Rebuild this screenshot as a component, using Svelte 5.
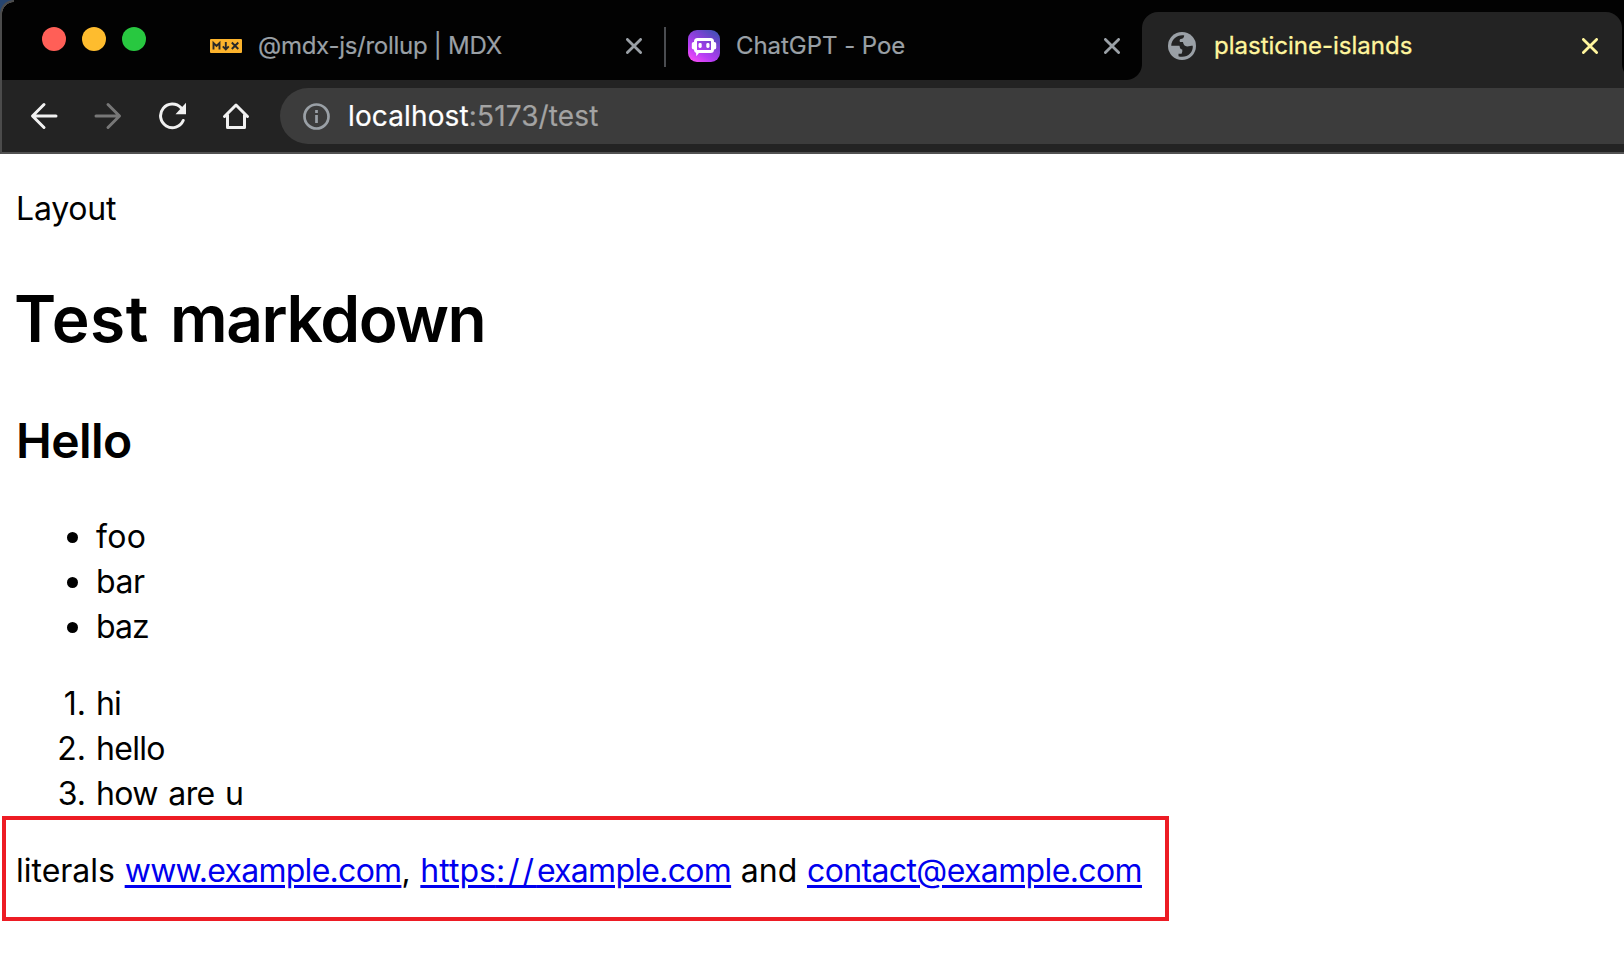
<script>
  const bullets = [
    { text: 'foo', track: 0.3 },
    { text: 'bar', track: -0.5 },
    { text: 'baz', track: -0.9 }
  ];
  const steps = [
    { text: 'hi', track: -0.8 },
    { text: 'hello', track: -0.7 },
    { text: 'how are u', track: -0.6 }
  ];
</script>

{#snippet cross()}
  <svg class="cross" width="16" height="16" viewBox="0 0 16 16"><path d="M1.4 1.4 14.6 14.6M14.6 1.4 1.4 14.6" /></svg>
{/snippet}

<div class="window">
  <header class="chrome">
    <div class="tabs">
      <div class="lights"><i class="red"></i><i class="yellow"></i><i class="green"></i></div>
      <div class="tab first">
        <svg width="32" height="14" viewBox="0 0 32 14"><rect width="32" height="14" rx="1" fill="#fcb32c" /><path d="M3.5 10.5V4l3 3 3-3v6.5M15.800 3v7M12.800 7.300l3 3 3-3M21.800 3.500l6.500 6.500M28.300 3.500 21.800 10" fill="none" stroke="#292929" stroke-width="1.900" /></svg>
        <span class="title">@mdx-js/rollup | MDX</span>
        {@render cross()}
      </div>
      <div class="sep"></div>
      <div class="tab second">
        <svg width="32" height="32" viewBox="0 0 32 32">
          <defs><linearGradient id="poe" x1="0.150" y1="1" x2="0.850" y2="0"><stop offset="0" stop-color="#f84df5" /><stop offset=".3" stop-color="#b83df5" /><stop offset=".65" stop-color="#8142d5" /><stop offset="1" stop-color="#3f51b5" /></linearGradient></defs>
          <rect width="32" height="32" rx="9" fill="url(#poe)" />
          <rect x="7.500" y="9.500" width="17" height="12" rx="2" fill="none" stroke="#fff" stroke-width="3" />
          <rect x="3.800" y="12" width="4" height="7.500" rx="1.800" fill="#fff" /><rect x="24.200" y="12" width="4" height="7.500" rx="1.800" fill="#fff" />
          <path d="M8 20.500h5L8.300 26.300Z" fill="#fff" />
          <rect x="10.500" y="13" width="3.200" height="5" rx="1.400" fill="#fff" /><rect x="18.300" y="13" width="3.200" height="5" rx="1.400" fill="#fff" />
        </svg>
        <span class="title">ChatGPT - Poe</span>
        {@render cross()}
      </div>
      <div class="tab active">
        <svg width="28" height="28" viewBox="2 2 20 20"><circle cx="12" cy="12" r="10" fill="#9aa0a6" /><path fill="#232323" d="M4.300 11.800C4.500 7.500 8 4.300 12.300 4.300c.6 0 1 .1 1.300.2-.2 1.800-1 2.500-3 2.600-.5 1-.3 1.500 0 2.100h2.100c.3 2 1.200 3.100 3 3.100 1.700 0 2.500-.5 4-.5.400 4.400-3 7.900-7.600 7.900-1.200 0-1.900-.1-2.600-.4v-1.800h2.200c.5-1 .700-2 .5-3-1-.1-1.700-.7-2-2.700Z" /></svg>
        <span class="title">plasticine-islands</span>
        {@render cross()}
      </div>
    </div>
    <div class="toolbar">
      <svg width="28" height="28" viewBox="0 0 28 28"><path d="M26 14H3M14 2.500 2.500 14 14 25.500" /></svg>
      <svg class="dim" width="28" height="28" viewBox="0 0 28 28"><path d="M2 14h23M14 2.500 25.500 14 14 25.500" /></svg>
      <svg width="28" height="28" viewBox="0 0 28 28"><path d="M25.200 18.500A11.800 11.800 0 1 1 23 5.800" /><path d="M28 .8v11.500H17.500Z" fill="#f1f1f1" stroke="none" /></svg>
      <svg width="28" height="28" viewBox="0 0 28 28"><path d="M2.500 14.500 14 3l11.500 11.500M5.500 13V25.500h17V13" /></svg>
      <div class="address">
        <svg class="info" width="28" height="28" viewBox="0 0 28 28"><circle cx="14.500" cy="14.500" r="12" /><path d="M14.500 13v8M14.500 8v3" /></svg>
        <span class="url"><b>localhost</b>:5173/test</span>
      </div>
    </div>
  </header>

  <main>
    <p class="layout">Layout</p>
    <h1><span class="wide">Test</span> <span class="tight">markdown</span></h1>
    <h2>Hello</h2>
    <ul>
      {#each bullets as b}<li><span class="dot"></span><span style="letter-spacing: {b.track}px">{b.text}</span></li>{/each}
    </ul>
    <ol>
      {#each steps as s, i}<li><span class="num">{i + 1}.</span><span class="step" style="letter-spacing: {s.track}px">{s.text}</span></li>{/each}
    </ol>
    <p class="literals">literals <a href="#www">www.example.com</a>, <a href="#https"><span class="scheme">https<span class="slashes">://</span></span>example.com</a> and <a href="#contact" class="mail">contact@example.com</a></p>
  </main>
  <div class="highlight"></div>
</div>

<style>
  :global(body) { margin: 0; background: #fff; }
  .window { position: relative; width: 1624px; height: 954px; overflow: hidden; background: #fff; color: #000; font-family: Inter, sans-serif; }
  .window::before { content: ''; position: absolute; left: 0; top: 0; width: 14px; height: 14px; background: radial-gradient(circle at 14px 14px, #020202 11.5px, #4b4b4b 12px, #4b4b4b 13.5px, #27456f 14.5px); }
  .chrome { height: 154px; box-sizing: border-box; background: #232323; border-left: 2px solid #4b4b4b; border-bottom: 2px solid #525252; }
  .tabs { display: flex; height: 80px; background: #020202; color: #9aa0a6; }
  .lights { display: flex; flex: none; gap: 16px; padding: 27px 0 0 40px; width: 208px; box-sizing: border-box; }
  .lights i { width: 24px; height: 24px; border-radius: 50%; }
  .red { background: #ff5f57; }
  .yellow { background: #febc2e; }
  .green { background: #28c840; }
  .tab { display: flex; flex: none; align-items: center; box-sizing: border-box; height: 68px; margin-top: 12px; }
  .tab > svg { flex: none; }
  .title { flex: 1; white-space: nowrap; font-size: 24px; line-height: 30px; -webkit-text-stroke: 0.2px currentColor; }
  .first { width: 432px; }
  .first .title { margin-left: 16px; letter-spacing: -0.27px; }
  .sep { flex: none; width: 2px; height: 40px; background: #4a4c50; margin: 27px 22px 0 22px; }
  .second { width: 432px; }
  .second .title { margin-left: 16px; letter-spacing: -0.05px; }
  .cross { fill: none; stroke: currentColor; stroke-width: 2.8; stroke-linecap: round; }
  .active { width: 480px; margin-left: 22px; padding: 0 24px 0 26px; background: #232323; color: #fff59d; border-radius: 16px 16px 0 0; position: relative; }
  .active::before, .active::after { content: ''; position: absolute; bottom: 0; width: 16px; height: 16px; }
  .active::before { left: -16px; background: radial-gradient(circle at 0 0, #020202 15.5px, #232323 16.5px); }
  .active::after { right: -16px; background: radial-gradient(circle at 16px 0, #020202 15.5px, #232323 16.5px); }
  .active .title { margin-left: 18px; -webkit-text-stroke-width: 0.3px; }
  .toolbar { display: flex; align-items: center; height: 72px; padding-left: 28px; gap: 36px; }
  .toolbar svg { flex: none; fill: none; stroke: #f1f1f1; stroke-width: 3; stroke-linecap: round; stroke-linejoin: round; }
  .toolbar .dim { stroke: #777; }
  .address { flex: 1; display: flex; align-items: center; height: 56px; margin-left: -6px; padding-left: 22px; border-radius: 28px 0 0 28px; background: #3c3c3c; }
  .toolbar .info { stroke: #9aa0a6; stroke-width: 2.7; stroke-linecap: butt; }
  .url { margin-left: 18px; font-size: 28px; line-height: 34px; letter-spacing: 0.13px; color: #a3a3a3; white-space: nowrap; -webkit-text-stroke: 0.2px currentColor; }
  .url b { font-weight: 400; color: #fff; }
  main { padding: 0 16px; font-size: 32px; line-height: 45px; display: flow-root; }
  p { margin: 32px 0; }
  .layout { letter-spacing: -0.2px; }
  h1 { margin: 42.88px 0 42.88px -2px; font-size: 64px; line-height: 90px; font-weight: 600; word-spacing: 5px; white-space: nowrap; }
  .wide { letter-spacing: 0.5px; }
  .tight { letter-spacing: -1.4px; }
  h2 { margin: 39.84px 0; font-size: 48px; line-height: 67px; font-weight: 600; letter-spacing: -0.6px; }
  ul, ol { list-style: none; margin: 32px 0; padding: 0; }
  ul { margin-top: 39.84px; }
  li { display: flex; }
  .dot { width: 11px; height: 11px; border-radius: 50%; background: #000; margin: 18px 18px 0 51px; }
  .num { width: 70px; margin-right: 10px; text-align: right; }
  .step { word-spacing: 2px; }
  .literals { white-space: nowrap; word-spacing: 0.7px; }
  a { color: #0000ee; letter-spacing: -0.72px; text-decoration: underline; text-decoration-thickness: 3px; text-underline-offset: 3px; }
  .scheme { letter-spacing: 0; }
  .slashes { letter-spacing: 2.9px; }
  .mail { letter-spacing: -0.62px; }
  .highlight { position: absolute; left: 2px; top: 816px; width: 1167px; height: 105px; box-sizing: border-box; border: 4px solid #ed1c24; }
</style>
